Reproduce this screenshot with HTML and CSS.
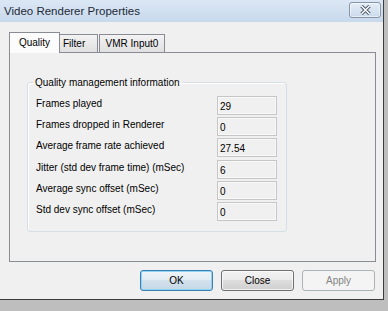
FILE: index.html
```html
<!DOCTYPE html>
<html lang="en">
<head>
    <meta charset="UTF-8">
    <title>Video Renderer Properties</title>
    <link rel="stylesheet" href="styles.css">
</head>
<body>
    <div class="window">
        <div class="titlebar">
            <span class="title">Video Renderer Properties</span>
            <button class="close-btn" title="Close">
                <svg width="13" height="10" viewBox="0 0 13 10">
                    <path d="M2.5 1 L10.5 9 M10.5 1 L2.5 9" stroke="#4d5766" stroke-width="3.4" fill="none"/>
                    <path d="M2.5 1 L10.5 9 M10.5 1 L2.5 9" stroke="#ffffff" stroke-width="1.5" fill="none"/>
                </svg>
            </button>
        </div>

        <div class="content">
            <div class="tabs">
                <div class="tab tab-active tab-quality">Quality</div>
                <div class="tab tab-filter">Filter</div>
                <div class="tab tab-vmr">VMR Input0</div>
            </div>

            <div class="panel">
                <fieldset class="group">
                    <legend>Quality management information</legend>
                    <div class="rows">
                        <div class="row">
                            <span class="label">Frames played</span>
                            <span class="value">29</span>
                        </div>
                        <div class="row">
                            <span class="label">Frames dropped in Renderer</span>
                            <span class="value">0</span>
                        </div>
                        <div class="row">
                            <span class="label">Average frame rate achieved</span>
                            <span class="value">27.54</span>
                        </div>
                        <div class="row">
                            <span class="label">Jitter (std dev frame time) (mSec)</span>
                            <span class="value">6</span>
                        </div>
                        <div class="row">
                            <span class="label">Average sync offset (mSec)</span>
                            <span class="value">0</span>
                        </div>
                        <div class="row">
                            <span class="label">Std dev sync offset (mSec)</span>
                            <span class="value">0</span>
                        </div>
                    </div>
                </fieldset>
            </div>

            <div class="buttons">
                <button class="btn btn-default">OK</button>
                <button class="btn">Close</button>
                <button class="btn" disabled>Apply</button>
            </div>
        </div>
    </div>
</body>
</html>
```

FILE: styles.css
```css
body {
    margin: 0;
    background-color: #bebebe;
    font-family: 'Liberation Sans', Arial, sans-serif;
    font-size: 10px;
    color: #000;
}
.window {
    width: 383px;
    height: 299px;
    background-color: #f0f0f0;
    border-right: 1px solid #3c3c3c;
    border-bottom: 1px solid #3c3c3c;
}
.titlebar {
    height: 22px;
    display: flex;
    justify-content: space-between;
    align-items: center;
    padding: 0 2px 0 4px;
    box-sizing: border-box;
    background: linear-gradient(#dbe7f4, #c8d9ec);
}
.title {
    font-size: 11.5px;
    color: #1e2a38;
}
.close-btn {
    align-self: flex-start;
    margin-top: 2px;
    width: 32px;
    height: 16px;
    padding: 0;
    border: 1px solid #8694a8;
    border-radius: 3px;
    background: linear-gradient(#e4edf7, #cbdaeb);
    box-shadow: inset 0 0 0 1px rgba(255, 255, 255, 0.5);
    display: flex;
    align-items: center;
    justify-content: center;
}
.content {
    padding: 10px 7px 0 9px;
}
.tabs {
    display: flex;
    align-items: flex-end;
    height: 20px;
}
.tab {
    box-sizing: border-box;
    height: 18px;
    line-height: 17px;
    border: 1px solid #898c95;
    border-bottom: none;
    background: linear-gradient(#f3f3f3, #e0e0e0);
    text-align: center;
}
.tab-active {
    height: 21px;
    line-height: 20px;
    margin-bottom: -1px;
    position: relative;
    z-index: 1;
    background: #fcfcfc;
}
.tab-quality {
    width: 51px;
}
.tab-filter {
    width: 38px;
    border-left: none;
    text-align: left;
    padding-left: 3px;
}
.tab-vmr {
    width: 66px;
    margin-left: 1px;
}
.panel {
    height: 210px;
    box-sizing: border-box;
    border: 1px solid #898c95;
    padding: 23px 0 0 17px;
}
.group {
    margin: 0;
    width: 260px;
    box-sizing: border-box;
    border: 1px solid #d5dfe5;
    border-radius: 3px;
    padding: 7px 9px 10px 8px;
    box-shadow: inset 1px 1px 0 #fff;
}
.group legend {
    padding: 0 2px;
    margin-left: -3px;
    line-height: 13px;
}
.rows {
    display: flex;
    flex-direction: column;
    gap: 2.2px;
}
.row {
    display: flex;
    align-items: flex-start;
    height: 19px;
}
.label {
    flex: 1;
    line-height: 13px;
    padding-top: 1px;
}
.value {
    width: 60px;
    height: 19px;
    box-sizing: border-box;
    border: 1px solid #c6c6c6;
    background-color: #f0f0f0;
    box-shadow: inset 0 0 0 1px #f8f8f8;
    line-height: 17px;
    padding: 1px 0 0 2px;
}
.buttons {
    display: flex;
    justify-content: flex-end;
    gap: 8px;
    padding-top: 8px;
    margin-right: 1px;
}
.btn {
    width: 73px;
    height: 21px;
    padding: 0;
    font-family: inherit;
    font-size: 10px;
    color: #000;
    border: 1px solid #707070;
    border-radius: 3px;
    background: linear-gradient(#f2f2f2 0%, #ebebeb 45%, #dddddd 50%, #cfcfcf 100%);
    box-shadow: inset 0 0 0 1px rgba(255, 255, 255, 0.7);
}
.btn-default {
    border-color: #3c7fb1;
    background: linear-gradient(#eef5fa 0%, #e2ecf3 45%, #d3e1ec 50%, #c6d8e6 100%);
    box-shadow: inset 0 0 0 1px #8fd4f6;
}
.btn:disabled {
    border-color: #adb2b5;
    background: #f4f4f4;
    color: #838383;
    box-shadow: none;
}
```
